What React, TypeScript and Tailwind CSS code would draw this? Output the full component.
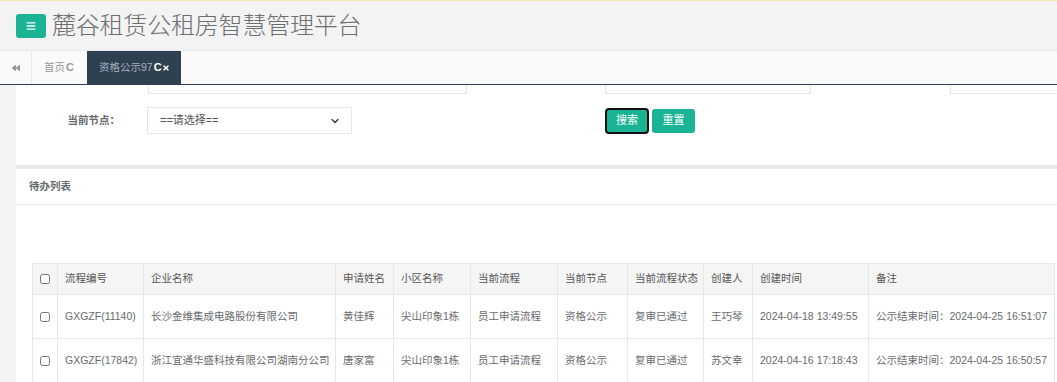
import React from "react";
import { FaBars, FaBackward, FaTimes } from "react-icons/fa";
import { ChevronDown } from "lucide-react";

const rows = [
  {
    no: "GXGZF(11140)",
    company: "长沙金维集成电路股份有限公司",
    name: "黄佳辉",
    area: "尖山印象1栋",
    flow: "员工申请流程",
    node: "资格公示",
    status: "复审已通过",
    creator: "王巧琴",
    time: "2024-04-18 13:49:55",
    note: "公示结束时间：2024-04-25 16:51:07",
  },
  {
    no: "GXGZF(17842)",
    company: "浙江宜通华盛科技有限公司湖南分公司",
    name: "唐家富",
    area: "尖山印象1栋",
    flow: "员工申请流程",
    node: "资格公示",
    status: "复审已通过",
    creator: "苏文幸",
    time: "2024-04-16 17:18:43",
    note: "公示结束时间：2024-04-25 16:50:57",
  },
];

const headers = ["流程编号", "企业名称", "申请姓名", "小区名称", "当前流程", "当前节点", "当前流程状态", "创建人", "创建时间", "备注"];

export default function App() {
  return (
    <div className="w-[1057px] h-[382px] overflow-hidden bg-white text-[#676a6c] font-['Liberation_Sans','Noto_Sans_CJK_SC',sans-serif]">
      <div className="h-px bg-[#f3e8b4]" />
      {/* top header */}
      <div className="h-[50px] bg-[#f3f3f4] border-b border-[#e7eaec] flex items-center pl-4 pt-px">
        <button className="w-[30px] h-[24px] rounded-[3px] bg-[#1ab394] flex items-center justify-center text-white">
          <FaBars size={10} />
        </button>
        <h1 className="ml-[6px] text-[24px] leading-none font-light text-[#6e6e6e] tracking-[-0.2px]">麓谷租赁公租房智慧管理平台</h1>
      </div>
      {/* tabs */}
      <div className="h-[34px] bg-[#fafafa] border-b border-[#2f4050] flex text-[10.5px]">
        <div className="w-[32px] border-r border-[#e7eaec] flex items-center justify-center text-[#999]">
          <FaBackward size={8} />
        </div>
        <div className="w-[55px] flex items-center pl-[12px] text-[#999]">
          首页<span className="font-bold text-[11px] ml-px">C</span>
        </div>
        <div className="w-[94px] bg-[#2f4050] flex items-center pl-[12px] text-[#a7b1c2]">
          资格公示97<span className="font-bold text-[11px] text-white ml-px">C</span>
          <FaTimes size={8} className="text-white" />
        </div>
      </div>
      <div className="flex">
        <div className="w-4 shrink-0 h-[300px] bg-[#f3f3f4]" />
        <div className="flex-1 min-w-0 bg-white">
          {/* clipped input row */}
          <div className="h-[9px] overflow-hidden relative flex">
            <div className="shrink-0 ml-[132px] w-[319px] h-[34px] -mt-[25px] border border-[#e5e6e7]" />
            <div className="shrink-0 ml-[138px] w-[206px] h-[34px] -mt-[25px] border border-[#e5e6e7]" />
            <div className="shrink-0 ml-[139px] w-[120px] h-[34px] -mt-[25px] border border-[#e5e6e7]" />
          </div>
          {/* form row */}
          <div className="flex items-center mt-[13px] h-[27px]">
            <div className="shrink-0 w-[104px] text-right font-bold text-[10.5px] text-[#676a6c]">当前节点：</div>
            <div className="shrink-0 ml-[27px] w-[205px] h-[27px] border border-[#e5e6e7] flex items-center justify-between pl-3 pr-[10px] text-[11px] text-[#555]">
              <span>==请选择==</span>
              <ChevronDown size={12} strokeWidth={3} className="text-[#444]" />
            </div>
            <button className="shrink-0 ml-[254px] w-[42px] h-[24px] rounded-[3px] bg-[#1ab394] text-white text-[11px] outline-2 outline-[#111] -outline-offset-1">搜索</button>
            <button className="shrink-0 ml-[4px] w-[43px] h-[24px] rounded-[3px] bg-[#1ab394] text-white text-[11px]">重置</button>
          </div>
          <div className="h-[31px]" />
          <div className="h-[4px] bg-[#e7eaec]" />
          <div className="h-[36px] border-b border-[#e7eaec] flex items-center pl-[13px] font-bold text-[10.5px] text-[#676a6c]">待办列表</div>
          <div className="h-[58px]" />
          {/* table */}
          <table className="ml-4 w-[1022px] table-fixed border-collapse text-[10.5px] text-[#676a6c]">
            <colgroup>
              <col className="w-[25px]" />
              <col className="w-[86px]" />
              <col className="w-[192px]" />
              <col className="w-[58px]" />
              <col className="w-[77px]" />
              <col className="w-[87px]" />
              <col className="w-[70px]" />
              <col className="w-[76px]" />
              <col className="w-[49px]" />
              <col className="w-[116px]" />
              <col className="w-[186px]" />
            </colgroup>
            <thead>
              <tr className="h-[31px] bg-[#f5f5f6]">
                <th className="border border-[#e7e7e7] text-center font-normal">
                  <input type="checkbox" className="w-[10px] h-[10px] align-middle" />
                </th>
                {headers.map((h) => (
                  <th key={h} className="border border-[#e7e7e7] text-left font-normal pl-[7px] text-[#555] whitespace-nowrap">{h}</th>
                ))}
              </tr>
            </thead>
            <tbody>
              {rows.map((r) => (
                <tr key={r.no} className="h-[44px]">
                  <td className="border border-[#e7e7e7] text-center">
                    <input type="checkbox" className="w-[10px] h-[10px] align-middle" />
                  </td>
                  {[r.no, r.company, r.name, r.area, r.flow, r.node, r.status, r.creator, r.time, r.note].map((v, i) => (
                    <td key={i} className="border border-[#e7e7e7] pl-[7px] whitespace-nowrap overflow-hidden">{v}</td>
                  ))}
                </tr>
              ))}
            </tbody>
          </table>
        </div>
      </div>
    </div>
  );
}
